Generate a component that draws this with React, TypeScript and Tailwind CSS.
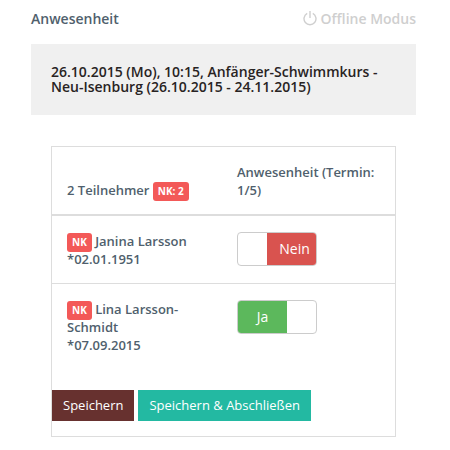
import React, { useState } from 'react';

interface Participant {
  id: number;
  name: string;
  birthday: string;
  present: boolean;
}

const initialParticipants: Participant[] = [
  { id: 1, name: 'Janina Larsson', birthday: '02.01.1951', present: false },
  { id: 2, name: 'Lina Larsson-Schmidt', birthday: '07.09.2015', present: true },
];

function PowerIcon() {
  return (
    <svg
      viewBox="0 0 14 16"
      className="w-[14px] h-4"
      fill="none"
      stroke="currentColor"
      strokeWidth="1.4"
      aria-hidden="true"
    >
      <path d="M4.2 2.4A6 6 0 1 0 9.8 2.4" />
      <path d="M7 0V7" />
    </svg>
  );
}

function Badge({ children }: { children: React.ReactNode }) {
  return (
    <span className="inline-block -my-1 rounded-[3px] bg-[#f35958] px-[5px] py-[3px] text-[10px] leading-[13px] font-bold text-white align-middle">
      {children}
    </span>
  );
}

interface PresenceSwitchProps {
  label: string;
  checked: boolean;
  onChange: () => void;
}

function PresenceSwitch({ label, checked, onChange }: PresenceSwitchProps) {
  return (
    <label className="relative flex w-20 h-[34px] overflow-hidden rounded border border-[#cccccc] bg-white text-sm font-normal text-white cursor-pointer">
      <input
        type="checkbox"
        role="switch"
        aria-label={label}
        checked={checked}
        onChange={onChange}
        className="absolute inset-0 m-0 opacity-0 cursor-pointer"
      />
      {checked ? (
        <span className="flex w-[49px] items-center justify-center bg-[#5cb85c]">Ja</span>
      ) : (
        <span className="ml-auto flex w-[49px] items-center justify-center bg-[#d9534f] pl-[6px]">Nein</span>
      )}
    </label>
  );
}

export default function App() {
  const [participants, setParticipants] = useState(initialParticipants);

  const togglePresence = (id: number) => {
    setParticipants(prev =>
      prev.map(p => (p.id === id ? { ...p, present: !p.present } : p))
    );
  };

  return (
    <div className="min-h-screen bg-white pl-[31px] pr-[34px] pt-[9px] pb-3 font-['Open_Sans','Noto_Sans',sans-serif] text-[13px] leading-[18px] text-[#505f6d]">
      {/* Header */}
      <header className="flex items-center justify-between text-sm font-semibold">
        <h1>Anwesenheit</h1>
        <button type="button" className="flex items-center gap-1 text-[#cfcfcf] cursor-pointer">
          <PowerIcon />
          Offline Modus
        </button>
      </header>

      {/* Course */}
      <div className="mt-[15px] bg-[#f0f0f0] px-5 pt-5 pb-[21px]">
        <h2 className="text-sm leading-[15px] font-semibold text-[#282323]">
          26.10.2015 (Mo), 10:15, Anfänger-Schwimmkurs - Neu-Isenburg (26.10.2015 - 24.11.2015)
        </h2>
      </div>

      {/* Participants */}
      <form
        className="mt-[31px] mx-5 border border-[#dddddd]"
        onSubmit={e => e.preventDefault()}
      >
        <table className="w-full table-fixed border-separate border-spacing-0 text-left font-semibold">
          <thead>
            <tr className="align-bottom">
              <th className="w-[170px] border-b-2 border-[#dddddd] px-[15px] pt-4 pb-[15px] font-semibold">
                2 Teilnehmer <Badge>NK: 2</Badge>
              </th>
              <th className="border-b-2 border-[#dddddd] px-[15px] pt-4 pb-[15px] font-semibold">
                Anwesenheit (Termin: 1/5)
              </th>
            </tr>
          </thead>
          <tbody>
            {participants.map(p => (
              <tr key={p.id} className="group align-top">
                <td className="border-b border-[#dddddd] px-[15px] pt-4 pb-[15px] group-last:border-transparent">
                  <Badge>NK</Badge> {p.name}
                  <br />*{p.birthday}
                </td>
                <td className="border-b border-[#dddddd] px-[15px] pt-4 pb-[15px] group-last:border-transparent">
                  <PresenceSwitch
                    label={`Anwesenheit ${p.name}`}
                    checked={p.present}
                    onChange={() => togglePresence(p.id)}
                  />
                </td>
              </tr>
            ))}
          </tbody>
        </table>

        <div className="flex gap-1 pt-5 pb-[15px] text-white">
          <button type="submit" className="bg-[#67312f] px-[11px] pt-[6px] pb-[7px] cursor-pointer">
            Speichern
          </button>
          <button type="submit" className="bg-[#23b9a2] px-[11px] pt-[6px] pb-[7px] cursor-pointer">
            Speichern &amp; Abschließen
          </button>
        </div>
      </form>
    </div>
  );
}
